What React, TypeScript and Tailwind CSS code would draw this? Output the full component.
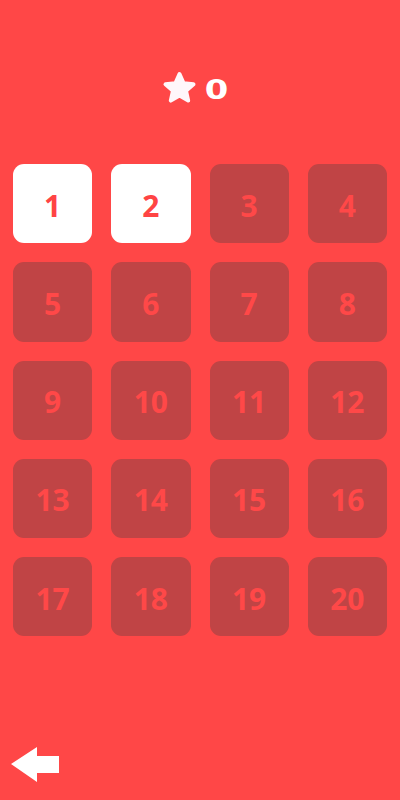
import React from "react";

export default function App() {
  const levels = Array.from({ length: 20 }, (_, i) => i + 1);
  return (
    <div
      className="w-[400px] h-[800px] bg-[#ff4747] flex flex-col overflow-hidden"
      style={{ fontFamily: '"Open Sans", "Liberation Sans", sans-serif' }}
    >
      <div className="flex items-center justify-center pt-[70px] h-[105px] pr-[12px]">
        <svg width="35" height="33" viewBox="0 0 35 33" className="block">
          <polygon
            points="17.5,3 21.6,12.2 31.5,13.2 24,19.8 26.2,29.6 17.5,24.6 8.8,29.6 11,19.8 3.5,13.2 13.4,12.2"
            fill="#fff7fa"
            stroke="#fff7fa"
            strokeWidth="4"
            strokeLinejoin="round"
          />
        </svg>
        <span
          className="ml-[9px] mt-[5px] w-[21px] text-center inline-block scale-x-[1.3] text-[26px] leading-none font-bold text-white"
          style={{ fontFamily: '"DejaVu Sans", sans-serif' }}
        >
          0
        </span>
      </div>
      <div className="mt-[59px] px-[13px] grid grid-cols-4 gap-x-[19px] gap-y-[19px]">
        {levels.map((n) => (
          <div
            key={n}
            className={
              n <= 2
                ? "h-[79.25px] rounded-[11px] bg-white flex items-center justify-center"
                : "h-[79.25px] rounded-[11px] bg-[#c04445] flex items-center justify-center"
            }
          >
            <span
              className={
                n <= 2
                  ? "text-[30px] leading-none font-bold text-[#ff4444] mt-[4px]"
                  : "text-[30px] leading-none font-bold text-[#ff4848] mt-[4px]"
              }
            >
              {n}
            </span>
          </div>
        ))}
      </div>
      <div className="mt-auto pl-[11px] pb-[18px]">
        <svg width="49" height="35" viewBox="0 0 49 35" className="block">
          <polygon points="0,17 26,0 26,9 48,9 48,26 26,26 26,35" fill="#ffffff" />
        </svg>
      </div>
    </div>
  );
}
